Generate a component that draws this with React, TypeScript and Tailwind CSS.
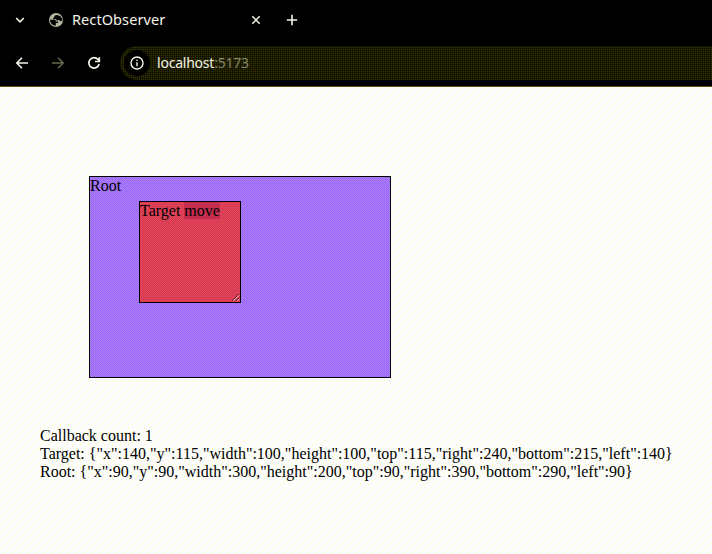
import React from "react";

const rootRect = { x: 90, y: 90, width: 300, height: 200, top: 90, right: 390, bottom: 290, left: 90 };
const targetRect = { x: 140, y: 115, width: 100, height: 100, top: 115, right: 240, bottom: 215, left: 140 };

function TabStrip() {
  return (
    <div className="flex h-10 items-center text-[#f4f4e8]">
      <svg className="ml-[14px] h-3 w-3" viewBox="0 0 12 12" fill="none" stroke="currentColor" strokeWidth="1.6">
        <path d="M2.2 4 6 7.8 9.8 4" />
      </svg>
      <svg className="ml-[22px] h-4 w-4" viewBox="0 0 16 16" fill="none">
        <circle cx="8" cy="8" r="7" fill="#b5b5a0" />
        <path d="M9 2.600 6.800 3.300v1.500H5.200v1.700H8v1.700h2.700l.7 1.300h2.500A6 6 0 0 0 9 2.600Z" fill="#000" transform="rotate(-12 10 6)" />
        <path d="M2 7.800h4.200c1 0 1.600.6 1.600 1.600H10v1.500H7.800v2.900A5.900 5.900 0 0 1 2 7.800Z" fill="#000" />
      </svg>
      <span className="ml-2 w-[178px] text-[14.5px] tracking-[0.08px]">RectObserver</span>
      <svg className="h-3 w-3" viewBox="0 0 12 12" fill="none" stroke="currentColor" strokeWidth="1.5">
        <path d="m2.300 2.300 7.400 7.400m0-7.400-7.400 7.400" />
      </svg>
      <svg className="ml-6 h-3 w-3" viewBox="0 0 12 12" fill="none" stroke="currentColor" strokeWidth="1.6">
        <path d="M6 .8v10.400M.8 6h10.400" />
      </svg>
    </div>
  );
}

function Toolbar() {
  return (
    <div className="flex h-[46px] items-center text-[#f4f4e8]">
      <svg className="ml-[14px] h-4 w-4" viewBox="0 0 16 16" fill="none" stroke="currentColor" strokeWidth="1.6">
        <path d="M14 8H3M8 2.800 2.800 8 8 13.200" />
      </svg>
      <svg className="ml-5 h-4 w-4 text-[#65654b]" viewBox="0 0 16 16" fill="none" stroke="currentColor" strokeWidth="1.6">
        <path d="M2 8h11M8 2.800 13.200 8 8 13.200" />
      </svg>
      <svg className="ml-5 h-4 w-4" viewBox="0 0 16 16" fill="none" stroke="currentColor" strokeWidth="1.7">
        <path d="M13.100 9a5.200 5.200 0 1 1-1.100-4.500l1.200 1.300M13.300 2.200v4.300H9" />
      </svg>
      <div className="ml-[18px] flex h-[34px] flex-1 items-center rounded-l-full bg-[#333300] bg-[linear-gradient(90deg,#0c0c00aa_1px,transparent_1px),linear-gradient(#0c0c00aa_1px,transparent_1px)] bg-size-[2px_2px] pl-1">
        <div className="flex h-[26px] w-[26px] items-center justify-center rounded-full bg-black">
          <svg className="h-[14px] w-[14px]" viewBox="0 0 14 14" fill="none" stroke="currentColor" strokeWidth="1.4">
            <circle cx="7" cy="7" r="6" />
            <path d="M7 6.200v4M7 3.700v1.400" />
          </svg>
        </div>
        <span className="ml-[7px] text-sm tracking-[-0.22px]">
          localhost<span className="text-[#85856a]">:5173</span>
        </span>
      </div>
    </div>
  );
}

export default function App() {
  return (
    <div className="flex h-[554px] w-[712px] flex-col overflow-hidden bg-black">
      <header className="border-b border-[#5c5410] bg-black font-['Noto_Sans',sans-serif]">
        <TabStrip />
        <Toolbar />
      </header>
      <main className="flex-1 bg-[#fdfdfb] bg-[radial-gradient(circle_at_4.5px_1.5px,#ffff90_0.6px,transparent_0.6px),radial-gradient(circle_at_0.5px_5.500px,#ffff90_0.6px,transparent_0.6px)] bg-size-[8px_8px] pt-[89px] font-['Liberation_Serif',serif] text-base leading-[18px] text-black">
        <div className="ml-[89px] h-[202px] w-[302px] border border-black bg-[repeating-conic-gradient(#9966ff_0_25%,#ad80ee_0_50%)] bg-size-[2px_2px]">
          <div>Root</div>
          <div className="mt-[6px] ml-[49px] h-[102px] w-[102px] resize overflow-hidden border border-black bg-[repeating-conic-gradient(#d9335a_0_25%,#de4b52_0_50%)] bg-size-[2px_2px]">
            Target <span className="bg-[#c42d4e]">move</span>
          </div>
        </div>
        <div className="mt-[49px] ml-10 whitespace-nowrap">
          <div>Callback count: 1</div>
          <div>Target: {JSON.stringify(targetRect)}</div>
          <div>Root: {JSON.stringify(rootRect)}</div>
        </div>
      </main>
    </div>
  );
}
